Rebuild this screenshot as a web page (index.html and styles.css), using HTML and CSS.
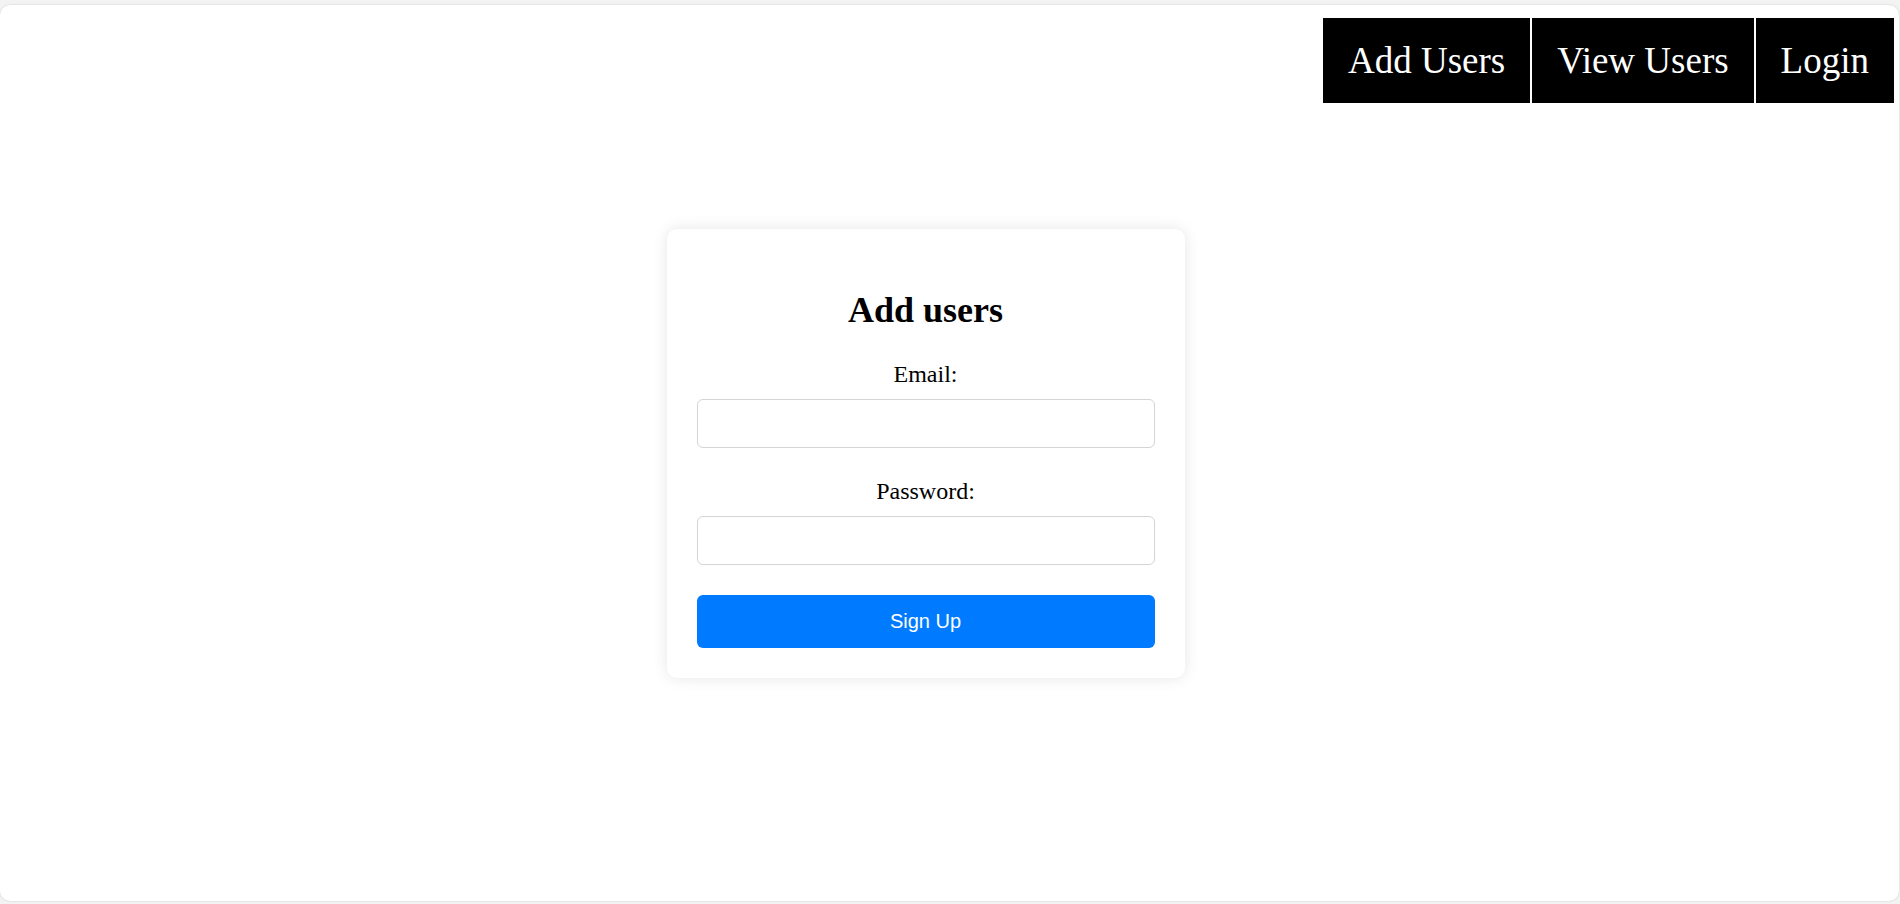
FILE: index.html
```html
<!DOCTYPE html>
<html lang="en">
<head>
<meta charset="utf-8">
<title>Add users</title>
<link rel="stylesheet" href="styles.css">
</head>
<body>
<div class="window">
  <nav class="topnav">
    <a class="navlink" href="#">Add Users</a>
    <a class="navlink" href="#">View Users</a>
    <a class="navlink" href="#">Login</a>
  </nav>
  <main class="stage">
    <form class="card">
      <h2 class="card-title">Add users</h2>
      <label class="field-label" for="email">Email:</label>
      <input class="field-input" type="email" id="email">
      <label class="field-label" for="password">Password:</label>
      <input class="field-input" type="password" id="password">
      <button class="submit-btn" type="button">Sign Up</button>
    </form>
  </main>
</div>
</body>
</html>
```

FILE: styles.css
```css
html, body {
  margin: 0;
  padding: 0;
  background: #f3f3f3;
}

body {
  font-family: "Liberation Serif", "Times New Roman", serif;
  color: #000;
  height: 904px;
  overflow: hidden;
}

.window {
  position: relative;
  margin-top: 5px;
  width: 1899px;
  height: 896px;
  background: #fff;
  border-radius: 10px;
  box-shadow: 0 0 2px rgba(0, 0, 0, 0.18);
}

.topnav {
  position: absolute;
  top: 13px;
  right: 5px;
  display: flex;
  gap: 2px;
}

.navlink {
  display: block;
  background: #000;
  color: #fff;
  text-decoration: none;
  font-size: 37px;
  line-height: 85px;
  padding: 0 25px;
}

.stage {
  box-sizing: border-box;
  height: 100%;
  display: flex;
  align-items: center;
  justify-content: center;
  padding-right: 48px;
}

.card {
  box-sizing: border-box;
  width: 518px;
  padding: 30px;
  background: #fff;
  border-radius: 10px;
  box-shadow: 0 0 15px rgba(0, 0, 0, 0.1);
}

.card-title {
  margin: 30px 0;
  font-size: 36px;
  font-weight: bold;
  text-align: center;
}

.field-label {
  display: block;
  font-size: 24px;
  text-align: center;
  margin-bottom: 11px;
}

.field-input {
  display: block;
  box-sizing: border-box;
  width: 100%;
  height: 49px;
  margin: 0 0 30px;
  border: 1px solid #d4d4d4;
  border-radius: 6px;
  background: #fff;
  font-size: 20px;
}

.submit-btn {
  display: block;
  width: 100%;
  height: 53px;
  border: none;
  border-radius: 6px;
  background: #007bff;
  color: #fff;
  font-family: "Liberation Sans", Arial, sans-serif;
  font-size: 20px;
}
```
